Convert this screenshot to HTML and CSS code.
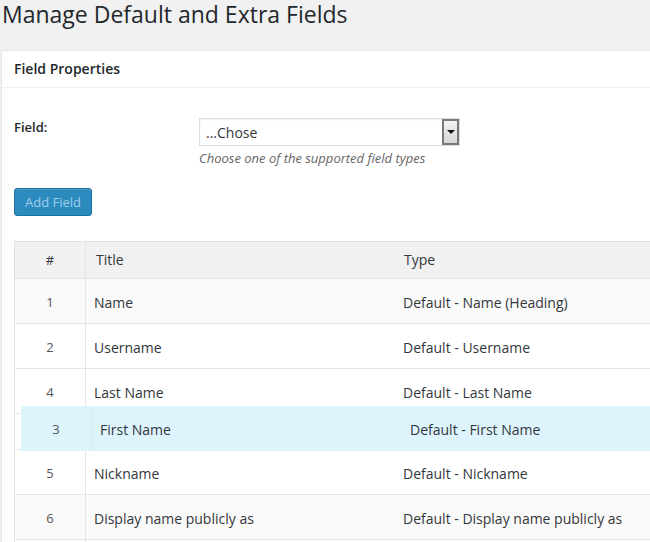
FILE: index.html
```html
<!DOCTYPE html>
<html>
<head>
<meta charset="utf-8">
<link rel="stylesheet" href="styles.css">
</head>
<body>
<h1 class="page-title">Manage Default and Extra Fields</h1>
<div class="postbox">
  <div class="postbox-header">Field Properties</div>
  <div class="postbox-inside">
    <div class="form-row">
      <label class="form-label">Field:</label>
      <div class="form-control">
        <div class="select">
          <span class="select-value">...Chose</span>
          <span class="select-arrow"><span class="tri"></span></span>
        </div>
        <p class="description">Choose one of the supported field types</p>
      </div>
    </div>
    <button class="btn-primary" disabled>Add Field</button>
    <div class="table-wrap">
      <table class="fields-table">
        <thead>
          <tr><th class="col-num">#</th><th class="col-title">Title</th><th class="col-type">Type</th></tr>
        </thead>
        <tbody>
          <tr class="alt"><td class="col-num">1</td><td class="col-title">Name</td><td class="col-type">Default - Name (Heading)</td></tr>
          <tr><td class="col-num">2</td><td class="col-title">Username</td><td class="col-type">Default - Username</td></tr>
          <tr><td class="col-num">4</td><td class="col-title">Last Name</td><td class="col-type">Default - Last Name</td></tr>
          <tr class="placeholder"><td class="col-num"></td><td class="col-title"></td><td class="col-type"></td></tr>
          <tr><td class="col-num">5</td><td class="col-title">Nickname</td><td class="col-type">Default - Nickname</td></tr>
          <tr class="alt"><td class="col-num">6</td><td class="col-title">Display name publicly as</td><td class="col-type">Default - Display name publicly as</td></tr>
          <tr><td class="col-num">&nbsp;</td><td class="col-title"></td><td class="col-type"></td></tr>
        </tbody>
      </table>
      <div class="drag-helper">
        <div class="col-num">3</div>
        <div class="col-title">First Name</div>
        <div class="col-type">Default - First Name</div>
      </div>
    </div>
  </div>
</div>
</body>
</html>
```

FILE: styles.css
```css
html, body {
  margin: 0;
  padding: 0;
  background: #f1f1f1;
  overflow: hidden;
}
body {
  font-family: "Open Sans", "DejaVu Sans", sans-serif;
  color: #32373c;
  width: 650px;
  height: 542px;
}
.page-title {
  margin: 0 0 21px 0;
  padding: 0 0 0 2px;
  font-size: 23px;
  font-weight: 400;
  line-height: 29px;
  color: #23282d;
}
.postbox {
  margin-left: 1px;
  width: 700px;
  background: #fff;
  border: 1px solid #e5e5e5;
}
.postbox-header {
  height: 36px;
  line-height: 36px;
  padding-left: 12px;
  font-size: 14px;
  font-weight: 600;
  color: #23282d;
  border-bottom: 1px solid #eee;
}
.postbox-inside {
  padding: 0 0 0 12px;
}
.form-row {
  display: flex;
  padding-top: 30px;
}
.form-label {
  width: 185px;
  font-size: 13px;
  font-weight: 600;
  color: #23282d;
  line-height: 18px;
}
.form-control {
  display: flex;
  flex-direction: column;
}
.select {
  box-sizing: border-box;
  width: 261px;
  height: 28px;
  border: 1px solid #ddd;
  display: flex;
  align-items: center;
  justify-content: space-between;
  background: #fff;
  box-shadow: inset 0 1px 2px rgba(0,0,0,.07);
}
.select-value {
  padding-left: 6px;
  font-size: 14px;
  color: #32373c;
}
.select-arrow {
  box-sizing: border-box;
  width: 17px;
  height: 26px;
  border: 2px solid #7a7a7a;
  background: linear-gradient(#f4f4f4, #d6d6d6);
  display: flex;
  align-items: center;
  justify-content: center;
}
.tri {
  width: 0;
  height: 0;
  border-left: 4px solid transparent;
  border-right: 4px solid transparent;
  border-top: 4px solid #111;
}
.description {
  margin: 3px 0 0 0;
  font-size: 13px;
  font-style: italic;
  color: #666;
  line-height: 18px;
}
.btn-primary {
  display: block;
  margin-top: 21px;
  box-sizing: border-box;
  width: 78px;
  height: 28px;
  padding: 0;
  background: #2b8bbf;
  border: 1px solid #1e72a0;
  border-radius: 3px;
  color: #9fcde6;
  font-family: "Open Sans", "DejaVu Sans", sans-serif;
  font-size: 13px;
  box-shadow: inset 0 1px 0 rgba(120,200,230,.3);
}
.table-wrap {
  position: relative;
  margin-top: 25px;
}
.fields-table {
  border-collapse: collapse;
  width: 700px;
  border: 1px solid #e1e1e1;
  font-size: 14px;
  table-layout: fixed;
}
.fields-table th {
  background: #f1f1f1;
  height: 35px;
  font-weight: 400;
  text-align: left;
  padding: 0 0 1px 0;
  border-bottom: 1px solid #e1e1e1;
  color: #32373c;
}
.fields-table td {
  height: 42px;
  padding: 2px 0 0 0;
  border-bottom: 1px solid #e5e5e5;
  background: #fff;
  color: #32373c;
}
.fields-table tr.alt td {
  background: #fafafa;
}
.fields-table tr.placeholder td {
  height: 33px;
}
.fields-table .col-num {
  width: 70px;
  text-align: center;
  border-right: 1px solid #e5e5e5;
  font-size: 13px;
  color: #555;
}
.fields-table th.col-num {
  color: #32373c;
}
.fields-table .col-title {
  width: 309px;
  padding-left: 8px;
}
.fields-table th.col-title {
  padding-left: 10px;
  width: 307px;
}
.fields-table .col-type {
  padding-left: 0;
}
.fields-table th.col-type {
  padding-left: 1px;
}
.drag-helper {
  position: absolute;
  left: 7px;
  top: 165px;
  width: 700px;
  height: 45px;
  background: #ddf4fd;
  display: flex;
  align-items: center;
  font-size: 14px;
  color: #32373c;
}
.drag-helper .col-num {
  box-sizing: border-box;
  width: 71px;
  height: 45px;
  line-height: 47px;
  text-align: center;
  border-right: 1px solid #d3e8f0;
  font-size: 13px;
  color: #555;
}
.drag-helper .col-title,
.drag-helper .col-type {
  padding-top: 2px;
}
.drag-helper .col-title {
  width: 318px;
  padding-left: 8px;
  box-sizing: border-box;
}
```
